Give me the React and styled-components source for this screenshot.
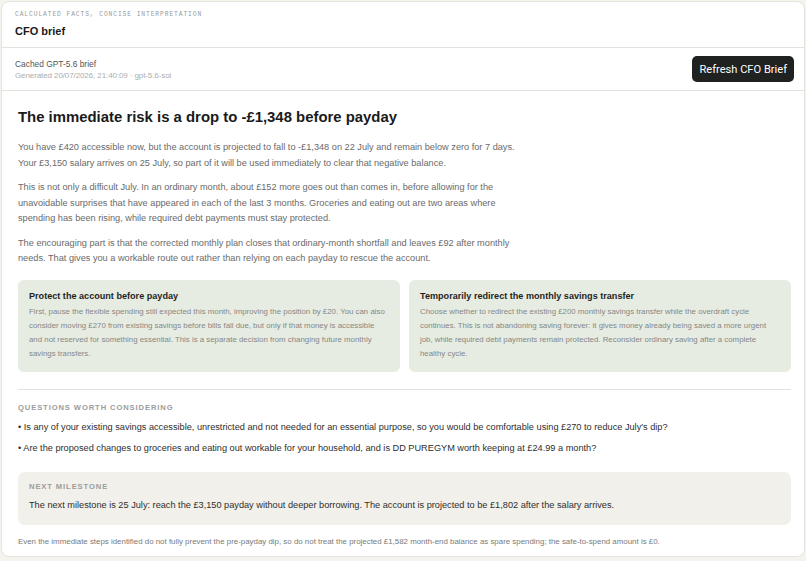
import React from "react";
import styled, { createGlobalStyle } from "styled-components";

const Global = createGlobalStyle`
  html, body { margin: 0; padding: 0; background: #f5f3ee; }
  body { font-family: "Liberation Sans", Arial, sans-serif; }
  * { box-sizing: border-box; }
`;

const Page = styled.div`
  padding: 1px 1px 4px 1px;
  width: 806px;
  height: 561px;
  overflow: hidden;
`;

const Card = styled.div`
  background: #fff;
  border: 1px solid #e6e3dc;
  border-radius: 8px;
  height: 556px;
  overflow: hidden;
`;

const Header = styled.div`
  padding: 9px 13px 0;
  height: 46px;
  border-bottom: 1px solid #e4e2dd;
`;

const Eyebrow = styled.div`
  font-family: "Liberation Mono", monospace;
  font-size: 6.3px;
  letter-spacing: 0.9px;
  color: #9a9a9a;
  text-transform: uppercase;
  line-height: 8px;
`;

const Title = styled.h1`
  margin: 5px 0 0;
  font-size: 11px;
  font-weight: 700;
  color: #1b1b1b;
  line-height: 14px;
`;

const MetaBar = styled.div`
  display: flex;
  align-items: center;
  justify-content: space-between;
  padding: 0 10px 0 13px;
  height: 43px;
  border-bottom: 1px solid #e4e2dd;
`;

const MetaText = styled.div`
  display: flex;
  flex-direction: column;
  gap: 3px;
`;

const MetaTitle = styled.div`
  font-size: 8.4px;
  color: #555;
  line-height: 10px;
`;

const MetaSub = styled.div`
  font-size: 8px;
  color: #adadad;
  line-height: 8px;
  letter-spacing: -0.1px;
`;

const Button = styled.button`
  font-family: Roboto, "Liberation Sans", sans-serif;
  font-size: 11.1px;
  color: #fff;
  background: #1f2220;
  border: none;
  border-radius: 5px;
  height: 26px;
  padding: 0 7px;
  cursor: pointer;
`;

const Body = styled.div`
  padding: 14px 13px 0 16px;
`;

const Headline = styled.h2`
  margin: 0 0 11px;
  font-size: 14.9px;
  font-weight: 700;
  color: #1a1a1a;
  line-height: 24px;
`;

const Para = styled.p`
  margin: 0 0 9px;
  font-size: 9.2px;
  line-height: 15.5px;
  color: #6a6a6a;
  max-width: 502px;
`;

const Actions = styled.div`
  display: grid;
  grid-template-columns: 1fr 1fr;
  gap: 9px;
  margin-top: 13px;
  padding-bottom: 17px;
  border-bottom: 1px solid #e4e2dd;
`;

const ActionCard = styled.div`
  background: #e6ece1;
  border-radius: 6px;
  padding: 10px 11px 9px 11px;
  height: 92px;
`;

const ActionTitle = styled.div`
  font-size: 9.1px;
  font-weight: 700;
  color: #1f1f1f;
  line-height: 12px;
  margin-bottom: 3px;
`;

const ActionText = styled.div`
  font-size: 7.85px;
  line-height: 14px;
  color: #878787;
`;

const SectionLabel = styled.div`
  font-size: 7.6px;
  font-weight: 700;
  letter-spacing: 0.9px;
  color: #9c9c9c;
  text-transform: uppercase;
  line-height: 10px;
`;

const Questions = styled.div`
  padding-top: 13px;
`;

const QuestionList = styled.ul`
  list-style: none;
  margin: 8px 0 0;
  padding: 0;
  display: flex;
  flex-direction: column;
  gap: 9px;
`;

const Question = styled.li`
  font-size: 9.2px;
  line-height: 12px;
  color: #2e2e2e;
`;

const Milestone = styled.div`
  margin-top: 18px;
  background: #f2f0ea;
  border-radius: 7px;
  padding: 10px 11px 11px;
  height: 53px;
  display: flex;
  flex-direction: column;
  gap: 7px;
`;

const MilestoneText = styled.div`
  font-size: 9.2px;
  line-height: 12px;
  color: #2e2e2e;
`;

const Footnote = styled.div`
  margin-top: 12px;
  font-size: 7.9px;
  line-height: 10px;
  color: #7a7a7a;
`;

export default function App() {
  return (
    <Page>
      <Global />
      <Card>
        <Header>
          <Eyebrow>Calculated facts, concise interpretation</Eyebrow>
          <Title>CFO brief</Title>
        </Header>
        <MetaBar>
          <MetaText>
            <MetaTitle>Cached GPT-5.6 brief</MetaTitle>
            <MetaSub>Generated 20/07/2026, 21:40:09 · gpt-5.6-sol</MetaSub>
          </MetaText>
          <Button>Refresh CFO Brief</Button>
        </MetaBar>
        <Body>
          <Headline>The immediate risk is a drop to -£1,348 before payday</Headline>
          <Para>
            You have £420 accessible now, but the account is projected to fall to -£1,348 on 22 July and remain below zero for 7 days.
            Your £3,150 salary arrives on 25 July, so part of it will be used immediately to clear that negative balance.
          </Para>
          <Para>
            This is not only a difficult July. In an ordinary month, about £152 more goes out than comes in, before allowing for the
            unavoidable surprises that have appeared in each of the last 3 months. Groceries and eating out are two areas where
            spending has been rising, while required debt payments must stay protected.
          </Para>
          <Para>
            The encouraging part is that the corrected monthly plan closes that ordinary-month shortfall and leaves £92 after monthly
            needs. That gives you a workable route out rather than relying on each payday to rescue the account.
          </Para>
          <Actions>
            <ActionCard>
              <ActionTitle>Protect the account before payday</ActionTitle>
              <ActionText>
                First, pause the flexible spending still expected this month, improving the position by £20. You can also
                consider moving £270 from existing savings before bills fall due, but only if that money is accessible
                and not reserved for something essential. This is a separate decision from changing future monthly
                savings transfers.
              </ActionText>
            </ActionCard>
            <ActionCard>
              <ActionTitle>Temporarily redirect the monthly savings transfer</ActionTitle>
              <ActionText>
                Choose whether to redirect the existing £200 monthly savings transfer while the overdraft cycle
                continues. This is not abandoning saving forever: it gives money already being saved a more urgent
                job, while required debt payments remain protected. Reconsider ordinary saving after a complete
                healthy cycle.
              </ActionText>
            </ActionCard>
          </Actions>
          <Questions>
            <SectionLabel>Questions worth considering</SectionLabel>
            <QuestionList>
              <Question>• Is any of your existing savings accessible, unrestricted and not needed for an essential purpose, so you would be comfortable using £270 to reduce July's dip?</Question>
              <Question>• Are the proposed changes to groceries and eating out workable for your household, and is DD PUREGYM worth keeping at £24.99 a month?</Question>
            </QuestionList>
          </Questions>
          <Milestone>
            <SectionLabel>Next milestone</SectionLabel>
            <MilestoneText>
              The next milestone is 25 July: reach the £3,150 payday without deeper borrowing. The account is projected to be £1,802 after the salary arrives.
            </MilestoneText>
          </Milestone>
          <Footnote>
            Even the immediate steps identified do not fully prevent the pre-payday dip, so do not treat the projected £1,582 month-end balance as spare spending; the safe-to-spend amount is £0.
          </Footnote>
        </Body>
      </Card>
    </Page>
  );
}
